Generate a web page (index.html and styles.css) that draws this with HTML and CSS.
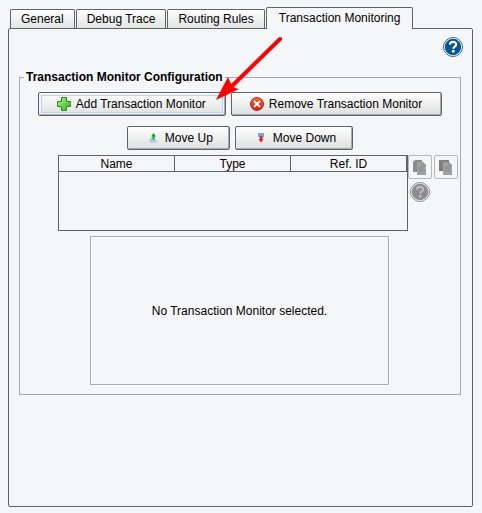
FILE: index.html
```
<!DOCTYPE html>
<html lang="en">
<head>
    <meta charset="UTF-8">
    <title>Transaction Monitoring</title>
    <link rel="stylesheet" href="styles.css">
</head>
<body>

<div class="tabs" role="tablist">
    <button class="tab" role="tab">General</button>
    <button class="tab" role="tab">Debug Trace</button>
    <button class="tab" role="tab">Routing Rules</button>
    <button class="tab active" role="tab" aria-selected="true">Transaction Monitoring</button>
</div>

<main class="panel" role="tabpanel">
    <div class="help-row">
        <button class="help" aria-label="Help">
            <svg width="20" height="20" viewBox="0 0 20 20">
                <circle cx="10" cy="10" r="9.5" fill="#fff" stroke="#2b6a99"/>
                <circle cx="10" cy="10" r="8.2" fill="#04568f"/>
                <path d="M6.9 7.6C7 5.6 8.3 4.9 10 4.9c1.9 0 3.2 1 3.2 2.500 0 2.200-2.900 2.100-2.900 4.400" fill="none" stroke="#fff" stroke-width="2.200"/>
                <rect x="9" y="13" width="2.500" height="2.500" fill="#fff"/>
            </svg>
        </button>
    </div>

    <fieldset class="config">
        <legend>Transaction Monitor Configuration</legend>

        <div class="buttons">
            <button class="btn focused">
                <svg width="14" height="14" viewBox="0 0 14 14">
                    <defs>
                        <linearGradient id="green" x1="0" y1="0" x2="1" y2="1">
                            <stop offset="0" stop-color="#b4ee8c"/>
                            <stop offset="1" stop-color="#32b51c"/>
                        </linearGradient>
                    </defs>
                    <path d="M4.500 .5h5v4h4v5h-4v4h-5v-4h-4v-5h4z" fill="url(#green)" stroke="#229018" stroke-linejoin="round"/>
                </svg>
                Add Transaction Monitor
            </button>
            <button class="btn">
                <svg width="14" height="14" viewBox="0 0 14 14">
                    <defs>
                        <linearGradient id="red" x1="0" y1="0" x2="0" y2="1">
                            <stop offset="0" stop-color="#f5683f"/>
                            <stop offset="1" stop-color="#cf1d08"/>
                        </linearGradient>
                    </defs>
                    <circle cx="7" cy="7" r="6.500" fill="url(#red)" stroke="#c42a14"/>
                    <path d="M4.600 4.600l4.800 4.800M9.400 4.600l-4.800 4.800" stroke="#fff" stroke-width="2" stroke-linecap="round"/>
                </svg>
                Remove Transaction Monitor
            </button>
        </div>

        <div class="buttons">
            <button class="btn move">
                <svg width="8" height="10" viewBox="0 0 8 10">
                    <path d="M1 5h3v1h3.500v3.500H.5V8z" fill="#a9cbe6"/>
                    <path d="M4.500 0L7 3.500H5.500V6.500h-2v-3H2z" fill="#12a51f"/>
                </svg>
                Move Up
            </button>
            <button class="btn move">
                <svg width="8" height="10" viewBox="0 0 8 10">
                    <path d="M1 0h6v4L5 6 1 4z" fill="#6fa8d8"/>
                    <path d="M3 3h2v3h1.500L4 9.500 1.500 6H3z" fill="#f0141e"/>
                </svg>
                Move Down
            </button>
        </div>

        <div class="list">
            <div class="table-box">
                <table>
                    <thead>
                        <tr><th>Name</th><th>Type</th><th>Ref. ID</th></tr>
                    </thead>
                    <tbody></tbody>
                </table>
            </div>
            <div class="tools">
                <button class="tool" aria-label="Copy" disabled>
                    <svg width="14" height="16" viewBox="0 0 14 16">
                        <path d="M0 3l2-2h7v12H0z" fill="#8c8c8c"/>
                        <path d="M4 3h6l3 3v10H4z" fill="#a0a0a0"/>
                        <path d="M10 3v3h3M6 8h5M6 10h5M6 12h5" fill="none" stroke="#8c8c8c"/>
                    </svg>
                </button>
                <button class="tool" aria-label="Paste" disabled>
                    <svg width="14" height="16" viewBox="0 0 14 16">
                        <path d="M0 1h10v11H0z" fill="#7e7e7e"/>
                        <path d="M4 3h6l3 3v10H4z" fill="#a0a0a0"/>
                        <path d="M10 3v3h3M6 8h5M6 10h5M6 12h5" fill="none" stroke="#8c8c8c"/>
                    </svg>
                </button>
                <button class="help" aria-label="List help" disabled>
                    <svg width="20" height="20" viewBox="0 0 20 20">
                        <circle cx="10" cy="10" r="9.500" fill="#f5f6f8" stroke="#8a8a8a"/>
                        <circle cx="10" cy="10" r="8.200" fill="#8c8c8c"/>
                        <path d="M6.900 7.600C7 5.600 8.300 4.900 10 4.900c1.900 0 3.200 1 3.200 2.500 0 2.200-2.900 2.100-2.900 4.400" fill="none" stroke="#bbb" stroke-width="2.200"/>
                        <rect x="9" y="13" width="2.500" height="2.500" fill="#bbb"/>
                    </svg>
                </button>
            </div>
        </div>

        <div class="message">No Transaction Monitor selected.</div>
    </fieldset>

    <!-- pointer to the Add button -->
    <svg class="arrow" width="70" height="66" viewBox="0 0 70 66">
        <path d="M65 4L16 52" stroke="#fe0000" stroke-width="4" stroke-linecap="round"/>
        <path d="M1 65L13 42l3 7 4 4 4 1z" fill="#fe0000"/>
    </svg>
</main>

</body>
</html>
```

FILE: styles.css
```
* {
    box-sizing: border-box;
}
body {
    display: flex;
    flex-direction: column;
    min-height: 100vh;
    margin: 0;
    padding: 7px 9px 6px 8px;
    background: #f5f6f8;
    color: #000;
    font-family: "Liberation Sans", Arial, sans-serif;
    font-size: 12px;
    line-height: 14px;
}
button {
    margin: 0;
    padding: 0;
    font: inherit;
    color: inherit;
    white-space: nowrap;
}
svg {
    display: block;
    flex: none;
}

/* tabs */
.tabs {
    display: flex;
    align-items: flex-end;
    gap: 1px;
    padding-left: 2px;
}
.tab {
    height: 19px;
    padding: 0 10px;
    border: 1px solid #606266;
    border-bottom: 0;
    border-radius: 2px 2px 0 0;
    background: linear-gradient(#fdfdfd, #e3e4e4);
}
.tab.active {
    position: relative;
    z-index: 1;
    height: 22px;
    margin-bottom: -1px;
    padding: 0 12px 2px;
    background: #f5f6f8;
}
.panel {
    position: relative;
    flex: 1;
    padding: 8px 11px 8px 10px;
    border: 1px solid #606266;
    border-radius: 2px;
}
.help-row {
    display: flex;
    justify-content: flex-end;
    margin-right: -2px;
}
.help {
    border: 0;
    background: none;
}

/* configuration group */
.config {
    min-width: 0;
    margin: 13px 0 0;
    padding: 8px 2px 9px;
    border: 1px solid #a9abb3;
}
.config legend {
    margin-left: 2px;
    padding: 0 2px;
    font-weight: bold;
}
.buttons {
    display: flex;
    justify-content: center;
    gap: 5px;
    margin-bottom: 10px;
}
.btn {
    display: flex;
    align-items: center;
    justify-content: center;
    gap: 5px;
    height: 24px;
    padding: 0 19px 0 18px;
    border: 1px solid #606266;
    border-radius: 2px;
    background: linear-gradient(#fefefe, #dedfdf);
    box-shadow: inset -1px -1px #a9aaac;
}
.btn.focused {
    box-shadow: inset -1px -1px #a9aaac, inset 0 0 0 2px #f4f5f6, inset 0 0 0 3px #b5d3f5;
}
.btn.move {
    gap: 8px;
    padding: 0 16px 0 21px;
}
.list {
    display: flex;
    margin: -5px 0 5px 36px;
}
.table-box {
    flex: 1;
    height: 76px;
    border: 1px solid #606266;
}
table {
    width: 100%;
    table-layout: fixed;
    border-collapse: separate;
    border-spacing: 0;
}
th {
    height: 16px;
    padding: 2px 0 0;
    border-right: 1px solid #606266;
    border-bottom: 1px solid #606266;
    font-weight: normal;
    line-height: 13px;
}
.tools {
    display: flex;
    flex-wrap: wrap;
    align-content: flex-start;
    gap: 3px 2px;
    width: 50px;
}
.tool {
    display: flex;
    align-items: center;
    justify-content: center;
    width: 24px;
    height: 24px;
    border: 1px solid #b5b6c1;
    border-radius: 2px;
    background: none;
}
.tools .help {
    margin-left: 2px;
}
.message {
    display: flex;
    align-items: center;
    justify-content: center;
    height: 149px;
    margin: 0 69px 0 68px;
    border: 1px solid #a9abad;
    box-shadow: 1px 1px #fff, inset 1px 1px #fff;
}
.arrow {
    position: absolute;
    top: 6px;
    left: 206px;
}
```
